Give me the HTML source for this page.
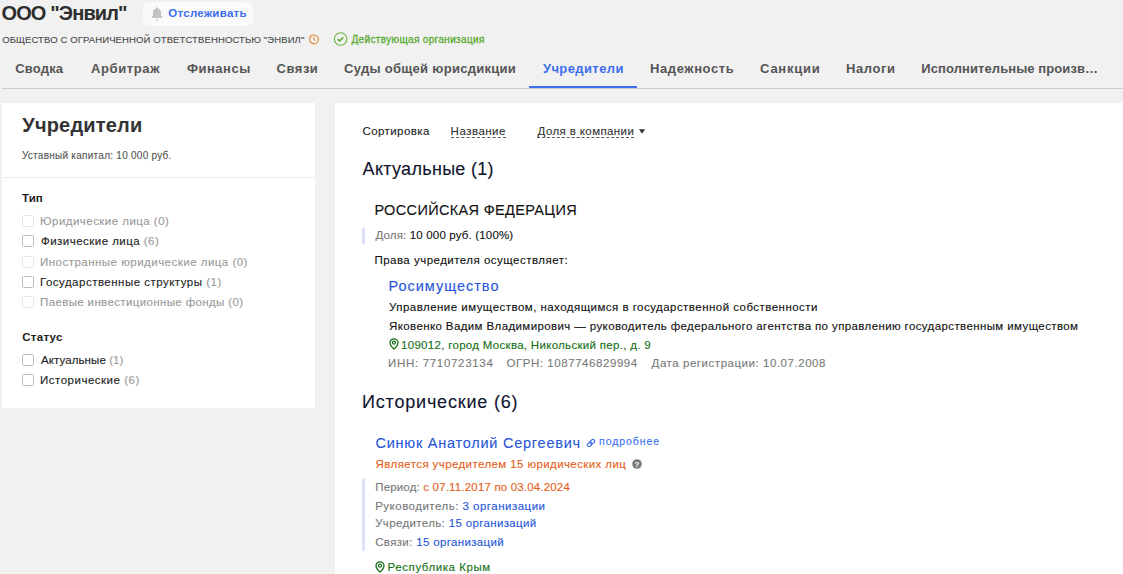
<!DOCTYPE html>
<html><head><meta charset="utf-8"><style>
*{margin:0;padding:0;box-sizing:border-box}
html,body{width:1123px;height:574px;overflow:hidden;background:#f1f1f1;font-family:"Liberation Sans",sans-serif;position:relative}
.t{position:absolute;white-space:nowrap}
.r{-webkit-text-stroke:0.12px currentColor}
.abs{position:absolute}
.cb{position:absolute;width:12px;height:12px;border:1px solid #bdbdbd;border-radius:1.5px;background:#fff}
.cb.d{border-color:#e6e6e6}
</style></head><body>
<div class="abs" style="left:143px;top:2px;width:110px;height:24px;background:#fafafa;border-radius:6px"></div>
<svg class="abs" style="left:150px;top:6px" width="14" height="15" viewBox="0 0 14 15"><path d="M7 1.2c.6 0 1 .4 1 .9v.4c1.9.5 3.1 2.2 3.1 4.2v3.1l1.3 1.5v.6H1.6v-.6l1.3-1.5V6.7c0-2 1.2-3.700 3.1-4.2v-.4c0-.5.4-.9 1-.9z" fill="#c2c2c2"/><path d="M5.6 13.2h2.8c0 .8-.6 1.300-1.400 1.300s-1.4-.5-1.4-1.3z" fill="#c2c2c2"/></svg>
<svg class="abs" style="left:308px;top:34px" width="12" height="11" viewBox="0 0 12 11"><circle cx="6" cy="5.4" r="4.4" fill="none" stroke="#e08a3c" stroke-width="1.2"/><path d="M6 3v2.6l1.6 1" fill="none" stroke="#e08a3c" stroke-width="1.1"/></svg>
<svg class="abs" style="left:333px;top:32px" width="15" height="15" viewBox="0 0 15 15"><circle cx="7.6" cy="7" r="6.3" fill="none" stroke="#6cb543" stroke-width="1.1"/><path d="M4.6 7.1l2 1.9 3.6-3.6" fill="none" stroke="#5aab32" stroke-width="1.6"/></svg>
<div class="abs" style="left:2px;top:88px;width:1121px;height:1px;background:#cdcdcd"></div>
<div class="abs" style="left:529px;top:86px;width:108px;height:2px;background:#3d6ef0"></div>
<div class="abs" style="left:2px;top:103px;width:313px;height:305px;background:#fff"></div>
<div class="abs" style="left:2px;top:177px;width:313px;height:1px;background:#ececec"></div>
<div class="cb d" style="left:22px;top:215px"></div>
<div class="cb" style="left:22px;top:235px"></div>
<div class="cb d" style="left:22px;top:256px"></div>
<div class="cb" style="left:22px;top:276px"></div>
<div class="cb d" style="left:22px;top:296px"></div>
<div class="cb" style="left:22px;top:354px"></div>
<div class="cb" style="left:22px;top:374px"></div>
<div class="abs" style="left:335px;top:103px;width:788px;height:471px;background:#fff"></div>
<div class="abs" style="left:451px;top:137px;width:55px;height:0;border-top:1px dashed #555"></div>
<div class="abs" style="left:537px;top:137px;width:97px;height:0;border-top:1px dashed #555"></div>
<svg class="abs" style="left:638px;top:128px" width="8" height="7" viewBox="0 0 8 7"><path d="M1 1.3h6L4 5.8z" fill="#333"/></svg>
<div class="abs" style="left:362px;top:227px;width:3px;height:16.5px;background:#dde1f8;border-radius:2px"></div>
<div class="abs" style="left:362px;top:478px;width:3px;height:72.5px;background:#dde1f8;border-radius:2px"></div>
<svg class="abs" style="left:388.5px;top:337.5px" width="10" height="12" viewBox="0 0 10 12"><path d="M5 11.1C2.6 8.8 1.0 6.8 1.0 4.7 1.0 2.5 2.8 .8 5 .8s4 1.7 4 3.9c0 2.1-1.6 4.1-4 6.4z" fill="none" stroke="#157015" stroke-width="1.3"/><circle cx="5" cy="4.7" r="1.5" fill="none" stroke="#157015" stroke-width="1.2"/></svg>
<svg class="abs" style="left:374.5px;top:560.5px" width="10" height="12" viewBox="0 0 10 12"><path d="M5 11.1C2.6 8.8 1.0 6.8 1.0 4.7 1.0 2.5 2.8 .8 5 .8s4 1.7 4 3.9c0 2.1-1.6 4.1-4 6.4z" fill="none" stroke="#157015" stroke-width="1.3"/><circle cx="5" cy="4.7" r="1.5" fill="none" stroke="#157015" stroke-width="1.2"/></svg>
<svg class="abs" style="left:586px;top:438px" width="10" height="10" viewBox="0 0 10 10"><g fill="none" stroke="#3d6ef0" stroke-width="1.15" transform="rotate(-45 5 5)"><rect x="0.6" y="3.3" width="5" height="3.4" rx="1.7"/><rect x="4.4" y="3.3" width="5" height="3.4" rx="1.7"/></g></svg>
<svg class="abs" style="left:632px;top:459px" width="10" height="10" viewBox="0 0 10 10"><circle cx="5" cy="5" r="4.8" fill="#7b7b7b"/><text x="5" y="8.2" font-family="Liberation Sans" font-weight="bold" font-size="8" fill="#fff" text-anchor="middle">?</text></svg>
<div class="t" style="left:1.50px;top:2.87px;font-size:20px;line-height:20px;font-weight:700;color:#2e2e2e;letter-spacing:-0.87px;">ООО "Энвил"</div>
<div class="t" style="left:168.21px;top:8.07px;font-size:11.5px;line-height:11.5px;font-weight:700;color:#3d6ef0;letter-spacing:0.295px;">Отслеживать</div>
<div class="t r" style="left:2.13px;top:34.56px;font-size:9.5px;line-height:9.5px;font-weight:400;color:#4a4a4a;letter-spacing:0.117px;">ОБЩЕСТВО С ОГРАНИЧЕННОЙ ОТВЕТСТВЕННОСТЬЮ "ЭНВИЛ"</div>
<div class="t r" style="left:351.50px;top:34.73px;font-size:10px;line-height:10px;font-weight:400;color:#5aab32;letter-spacing:0.351px;-webkit-text-stroke:0.3px currentColor">Действующая организация</div>
<div class="t" style="left:15.32px;top:61.80px;font-size:13px;line-height:13px;font-weight:700;color:#555555;letter-spacing:0.154px;">Сводка</div>
<div class="t" style="left:90.92px;top:61.80px;font-size:13px;line-height:13px;font-weight:700;color:#555555;letter-spacing:0.633px;">Арбитраж</div>
<div class="t" style="left:186.92px;top:61.80px;font-size:13px;line-height:13px;font-weight:700;color:#555555;letter-spacing:0.496px;">Финансы</div>
<div class="t" style="left:276.52px;top:61.80px;font-size:13px;line-height:13px;font-weight:700;color:#555555;letter-spacing:0.522px;">Связи</div>
<div class="t" style="left:344.12px;top:61.80px;font-size:13px;line-height:13px;font-weight:700;color:#555555;letter-spacing:0.285px;">Суды общей юрисдикции</div>
<div class="t" style="left:542.92px;top:61.80px;font-size:13px;line-height:13px;font-weight:700;color:#3d6ef0;letter-spacing:0.403px;">Учредители</div>
<div class="t" style="left:649.92px;top:61.80px;font-size:13px;line-height:13px;font-weight:700;color:#555555;letter-spacing:0.62px;">Надежность</div>
<div class="t" style="left:760.12px;top:61.80px;font-size:13px;line-height:13px;font-weight:700;color:#555555;letter-spacing:0.736px;">Санкции</div>
<div class="t" style="left:845.92px;top:61.80px;font-size:13px;line-height:13px;font-weight:700;color:#555555;letter-spacing:0.615px;">Налоги</div>
<div class="t" style="left:921.32px;top:61.80px;font-size:13px;line-height:13px;font-weight:700;color:#555555;letter-spacing:0.085px;">Исполнительные произв…</div>
<div class="t" style="left:22.30px;top:115.07px;font-size:20px;line-height:20px;font-weight:700;color:#333333;letter-spacing:0.177px;">Учредители</div>
<div class="t r" style="left:21.90px;top:151.34px;font-size:10px;line-height:10px;font-weight:400;color:#555555;letter-spacing:0.264px;">Уставный капитал: 10 000 руб.</div>
<div class="t" style="left:22.01px;top:193.47px;font-size:11.5px;line-height:11.5px;font-weight:700;color:#222222;letter-spacing:0.105px;">Тип</div>
<div class="t r" style="left:40.01px;top:216.07px;font-size:11.5px;line-height:11.5px;font-weight:400;color:#9a9a9a;letter-spacing:0.457px;">Юридические лица <span style="color:#999">(0)</span></div>
<div class="t r" style="left:41.01px;top:236.47px;font-size:11.5px;line-height:11.5px;font-weight:400;color:#222222;letter-spacing:0.466px;">Физические лица <span style="color:#999">(6)</span></div>
<div class="t r" style="left:40.01px;top:256.87px;font-size:11.5px;line-height:11.5px;font-weight:400;color:#9a9a9a;letter-spacing:0.481px;">Иностранные юридические лица <span style="color:#999">(0)</span></div>
<div class="t r" style="left:40.01px;top:277.27px;font-size:11.5px;line-height:11.5px;font-weight:400;color:#222222;letter-spacing:0.488px;">Государственные структуры <span style="color:#999">(1)</span></div>
<div class="t r" style="left:40.01px;top:296.67px;font-size:11.5px;line-height:11.5px;font-weight:400;color:#9a9a9a;letter-spacing:0.367px;">Паевые инвестиционные фонды <span style="color:#999">(0)</span></div>
<div class="t" style="left:22.21px;top:331.67px;font-size:11.5px;line-height:11.5px;font-weight:700;color:#222222;letter-spacing:0.291px;">Статус</div>
<div class="t r" style="left:41.01px;top:354.67px;font-size:11.5px;line-height:11.5px;font-weight:400;color:#222222;letter-spacing:0.092px;">Актуальные <span style="color:#999">(1)</span></div>
<div class="t r" style="left:40.01px;top:374.87px;font-size:11.5px;line-height:11.5px;font-weight:400;color:#222222;letter-spacing:0.507px;">Исторические <span style="color:#999">(6)</span></div>
<div class="t r" style="left:362.41px;top:125.87px;font-size:11.5px;line-height:11.5px;font-weight:400;color:#222222;letter-spacing:0.433px;">Сортировка</div>
<div class="t r" style="left:450.61px;top:125.87px;font-size:11.5px;line-height:11.5px;font-weight:400;color:#333333;letter-spacing:0.49px;">Название</div>
<div class="t r" style="left:537.61px;top:125.87px;font-size:11.5px;line-height:11.5px;font-weight:400;color:#333333;letter-spacing:0.387px;">Доля в компании</div>
<div class="t r" style="left:362.62px;top:160.16px;font-size:18px;line-height:18px;font-weight:400;color:#10142e;letter-spacing:0.295px;">Актуальные (1)</div>
<div class="t r" style="left:374.43px;top:202.93px;font-size:14.5px;line-height:14.5px;font-weight:400;color:#111111;letter-spacing:0.346px;">РОССИЙСКАЯ ФЕДЕРАЦИЯ</div>
<div class="t r" style="left:375.41px;top:230.07px;font-size:11.5px;line-height:11.5px;font-weight:400;color:#111111;letter-spacing:0.167px;"><span style="color:#777">Доля:</span> 10 000 руб. (100%)</div>
<div class="t r" style="left:374.41px;top:255.07px;font-size:11.5px;line-height:11.5px;font-weight:400;color:#111111;letter-spacing:0.482px;">Права учредителя осуществляет:</div>
<div class="t r" style="left:388.43px;top:279.13px;font-size:14.5px;line-height:14.5px;font-weight:400;color:#2756d8;letter-spacing:0.99px;">Росимущество</div>
<div class="t r" style="left:389.01px;top:302.27px;font-size:11.5px;line-height:11.5px;font-weight:400;color:#111111;letter-spacing:0.465px;">Управление имуществом, находящимся в государственной собственности</div>
<div class="t r" style="left:389.01px;top:320.87px;font-size:11.5px;line-height:11.5px;font-weight:400;color:#111111;letter-spacing:0.39px;">Яковенко Вадим Владимирович — руководитель федерального агентства по управлению государственным имуществом</div>
<div class="t r" style="left:401.01px;top:339.67px;font-size:11.5px;line-height:11.5px;font-weight:400;color:#157015;letter-spacing:0.303px;">109012, город Москва, Никольский пер., д. 9</div>
<div class="t r" style="left:388.01px;top:358.47px;font-size:11.5px;line-height:11.5px;font-weight:400;color:#7a7a7a;letter-spacing:0.684px;">ИНН: 7710723134</div>
<div class="t r" style="left:506.41px;top:358.47px;font-size:11.5px;line-height:11.5px;font-weight:400;color:#7a7a7a;letter-spacing:0.563px;">ОГРН: 1087746829994</div>
<div class="t r" style="left:651.61px;top:358.47px;font-size:11.5px;line-height:11.5px;font-weight:400;color:#7a7a7a;letter-spacing:0.539px;">Дата регистрации: 10.07.2008</div>
<div class="t r" style="left:362.02px;top:392.56px;font-size:18px;line-height:18px;font-weight:400;color:#10142e;letter-spacing:0.81px;">Исторические (6)</div>
<div class="t r" style="left:375.43px;top:435.53px;font-size:14.5px;line-height:14.5px;font-weight:400;color:#2756d8;letter-spacing:0.758px;">Синюк Анатолий Сергеевич</div>
<div class="t r" style="left:599.07px;top:436.31px;font-size:10.5px;line-height:10.5px;font-weight:400;color:#3d6ef0;letter-spacing:0.918px;">подробнее</div>
<div class="t r" style="left:375.61px;top:459.07px;font-size:11.5px;line-height:11.5px;font-weight:400;color:#e65e18;letter-spacing:0.4px;">Является учредителем 15 юридических лиц</div>
<div class="t r" style="left:375.21px;top:481.87px;font-size:11.5px;line-height:11.5px;font-weight:400;color:#e65e18;letter-spacing:0.172px;"><span style="color:#777">Период:</span> с 07.11.2017 по 03.04.2024</div>
<div class="t r" style="left:375.21px;top:500.87px;font-size:11.5px;line-height:11.5px;font-weight:400;color:#2756d8;letter-spacing:0.489px;"><span style="color:#777">Руководитель:</span> 3 организации</div>
<div class="t r" style="left:375.21px;top:518.27px;font-size:11.5px;line-height:11.5px;font-weight:400;color:#2756d8;letter-spacing:0.351px;"><span style="color:#777">Учредитель:</span> 15 организаций</div>
<div class="t r" style="left:375.21px;top:537.27px;font-size:11.5px;line-height:11.5px;font-weight:400;color:#2756d8;letter-spacing:0.341px;"><span style="color:#777">Связи:</span> 15 организаций</div>
<div class="t r" style="left:387.61px;top:562.47px;font-size:11.5px;line-height:11.5px;font-weight:400;color:#157015;letter-spacing:0.561px;">Республика Крым</div>
</body></html>
